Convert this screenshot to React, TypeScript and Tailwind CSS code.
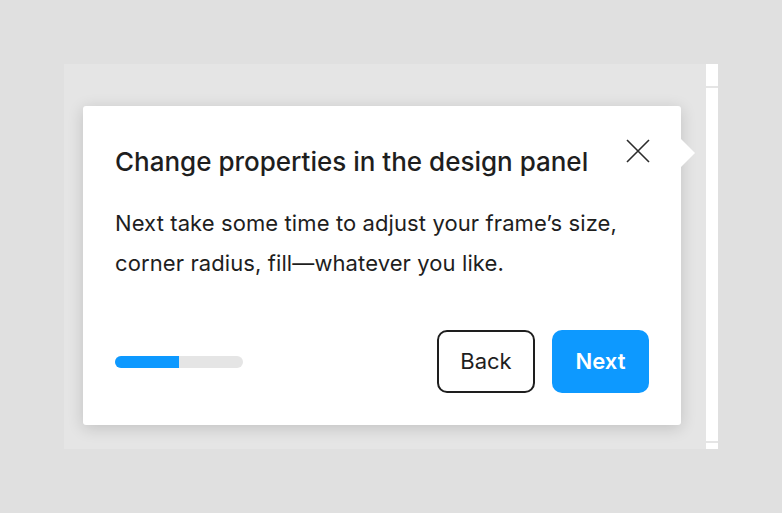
export default function App() {
  return (
    <div
      className="h-[513px] w-[782px] bg-[#e0e0e0] pl-[64px] pt-[64px]"
      style={{ fontFamily: "Inter, 'Noto Sans', sans-serif" }}
    >
      <div className="flex h-[385px]">
        <div className="w-[642px] bg-[#e5e5e5] pl-[19px] pt-[42px]">
          <div className="relative h-[319px] w-[598px] rounded-[3px] bg-white px-[32px] pb-[32px] pt-[34px] shadow-[0_3px_16px_rgba(0,0,0,0.16)]">
            <div className="absolute right-[-14px] top-[33px] h-0 w-0 border-y-[14px] border-l-[14px] border-y-transparent border-l-white" />
            <div className="flex items-start justify-between">
              <h1 className="text-[26px] font-medium leading-[44px] text-[#1e1e1e]">
                Change properties in the design panel
              </h1>
              <button className="mr-[-1px] mt-[-1px] p-0 text-[#2c2c2c]">
                <svg width="24" height="24" viewBox="0 0 24 24" fill="none">
                  <path d="M1 1L23 23M23 1L1 23" stroke="currentColor" strokeWidth="1.6" />
                </svg>
              </button>
            </div>
            <p className="mt-[19px] text-[22px] leading-[40px] tracking-[0.1px] text-[#1e1e1e]">
              Next take some time to adjust your frame’s size,
              <br />
              corner radius, fill—whatever you like.
            </p>
            <div className="mt-[47px] flex items-center justify-between">
              <div className="flex h-[12px] w-[128px] overflow-hidden rounded-full bg-[#e5e5e5]">
                <div className="h-full w-[64px] bg-[#0d99ff]" />
              </div>
              <div className="flex gap-[17px]">
                <button className="h-[63px] w-[98px] rounded-[10px] border-2 border-[#1e1e1e] text-[22px] text-[#1e1e1e]">
                  Back
                </button>
                <button className="h-[63px] w-[97px] rounded-[10px] bg-[#0d99ff] text-[22px] font-semibold text-white">
                  Next
                </button>
              </div>
            </div>
          </div>
        </div>
        <div className="flex w-[12px] flex-col bg-white">
          <div className="h-[22px]" />
          <div className="h-[2px] bg-[#e5e5e5]" />
          <div className="flex-1" />
          <div className="h-[2px] bg-[#e5e5e5]" />
          <div className="h-[6px]" />
        </div>
      </div>
    </div>
  );
}
